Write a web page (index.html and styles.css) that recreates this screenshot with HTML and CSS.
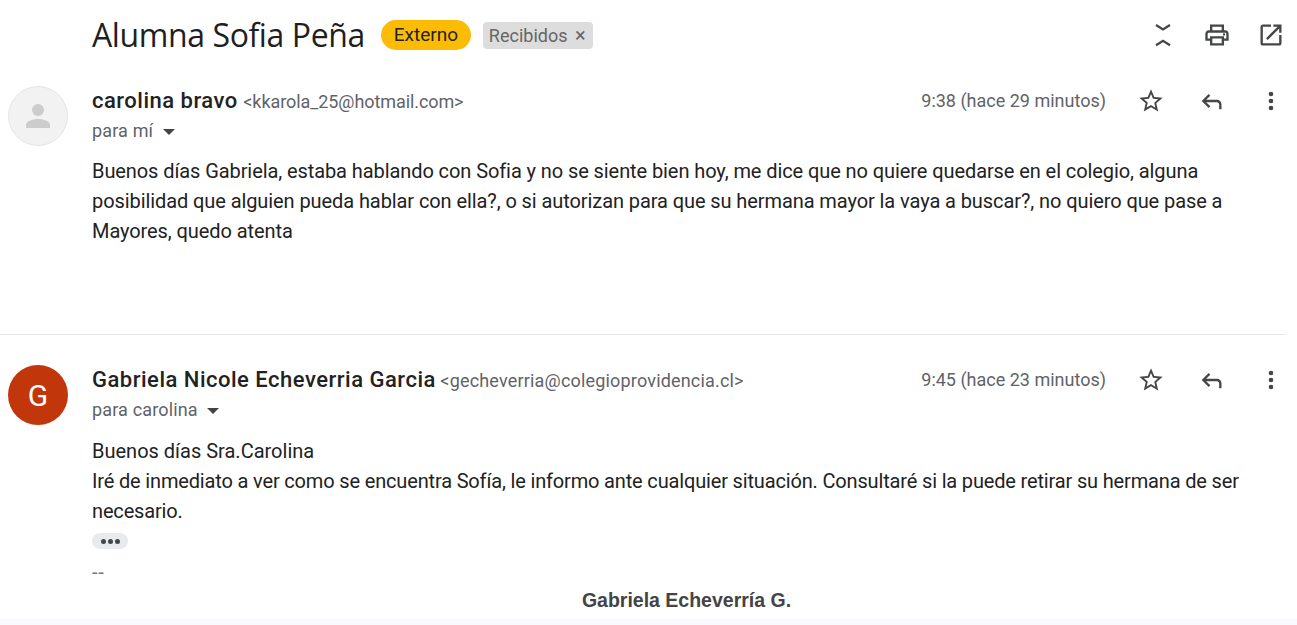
FILE: index.html
```html
<!DOCTYPE html>
<html lang="es">
<head>
<meta charset="utf-8">
<title>Alumna Sofia Peña</title>
<link rel="stylesheet" href="styles.css">
</head>
<body>
<main class="thread">
  <header class="subject">
    <h1 class="title">Alumna Sofia Peña</h1>
    <span class="tag-ext">Externo</span>
    <span class="tag-inbox">Recibidos <span class="tag-x">×</span></span>
    <div class="subject-actions">
      <svg class="icon icon-line" viewBox="0 0 24 24"><path d="M6 3.400L12 7.200L18 3.400M6 20.800L12 17L18 20.800"/></svg>
      <svg class="icon" viewBox="0 0 24 24"><path d="M19 8h-1V3H6v5H5c-1.66 0-3 1.34-3 3v6h4v4h12v-4h4v-6c0-1.66-1.34-3-3-3zM8 5h8v3H8V5zm8 12v2H8v-4h8v2zm2-2v-2H6v2H4v-4c0-.55.45-1 1-1h14c.55 0 1 .45 1 1v4h-2z"/><circle cx="18" cy="11.500" r="1"/></svg>
      <svg class="icon" viewBox="0 0 24 24"><path d="M19 19H5V5h7V3H5c-1.11 0-2 .9-2 2v14c0 1.100.89 2 2 2h14c1.100 0 2-.9 2-2v-7h-2v7zM14 3v2h3.590l-9.830 9.830 1.410 1.410L19 6.410V10h2V3h-7z"/></svg>
    </div>
  </header>

  <article class="msg msg-first">
    <div class="avatar avatar-blank">
      <svg class="avatar-person" viewBox="0 0 24 24"><circle cx="12" cy="8" r="4"/><path d="M12 14c-4 0-8 1.600-8 4v2h16v-2c0-2.400-4-4-8-4z"/></svg>
    </div>
    <div class="msg-main">
      <div class="msg-head">
        <div class="who">
          <div class="from"><b class="name">carolina bravo</b> <span class="addr addr-short">&lt;kkarola_25@hotmail.com&gt;</span></div>
          <div class="to">para mí <span class="caret"></span></div>
        </div>
        <div class="time">9:38 (hace 29 minutos)</div>
        <div class="msg-actions">
          <svg class="icon" viewBox="0 0 24 24"><path d="M22 9.240l-7.190-.62L12 2 9.190 8.630 2 9.240l5.460 4.730L5.820 21 12 17.270 18.180 21l-1.630-7.030L22 9.240zM12 15.400l-3.760 2.270 1-4.280-3.320-2.880 4.380-.38L12 6.100l1.710 4.040 4.380.38-3.320 2.880 1 4.280L12 15.400z"/></svg>
          <svg class="icon" viewBox="0 0 24 24"><path d="M21 19v-4c0-2.200-1.800-4-4-4H7.830l3.580-3.590L10 6l-6 6 6 6 1.410-1.410L7.830 13H17c1.100 0 2 .9 2 2v4h2z"/></svg>
          <svg class="icon" viewBox="0 0 24 24"><circle cx="12" cy="6" r="2"/><circle cx="12" cy="12" r="2"/><circle cx="12" cy="18" r="2"/></svg>
        </div>
      </div>
      <div class="body body-first">
        <p>Buenos días Gabriela, estaba hablando con Sofia y no se siente bien hoy, me dice que no quiere quedarse en el colegio, alguna posibilidad que alguien pueda hablar con ella?, o si autorizan para que su hermana mayor la vaya a buscar?, no quiero que pase a Mayores, quedo atenta</p>
      </div>
    </div>
  </article>

  <article class="msg msg-second">
    <div class="avatar avatar-g">G</div>
    <div class="msg-main">
      <div class="msg-head">
        <div class="who">
          <div class="from"><b class="name">Gabriela Nicole Echeverria Garcia</b> <span class="addr addr-long">&lt;gecheverria@colegioprovidencia.cl&gt;</span></div>
          <div class="to">para carolina <span class="caret"></span></div>
        </div>
        <div class="time">9:45 (hace 23 minutos)</div>
        <div class="msg-actions">
          <svg class="icon" viewBox="0 0 24 24"><path d="M22 9.240l-7.190-.62L12 2 9.190 8.630 2 9.240l5.460 4.730L5.820 21 12 17.270 18.180 21l-1.630-7.030L22 9.240zM12 15.400l-3.760 2.270 1-4.280-3.320-2.880 4.380-.38L12 6.100l1.710 4.040 4.380.38-3.320 2.880 1 4.280L12 15.400z"/></svg>
          <svg class="icon" viewBox="0 0 24 24"><path d="M21 19v-4c0-2.200-1.800-4-4-4H7.830l3.580-3.590L10 6l-6 6 6 6 1.410-1.410L7.830 13H17c1.100 0 2 .9 2 2v4h2z"/></svg>
          <svg class="icon" viewBox="0 0 24 24"><circle cx="12" cy="6" r="2"/><circle cx="12" cy="12" r="2"/><circle cx="12" cy="18" r="2"/></svg>
        </div>
      </div>
      <div class="body body-second">
        <p>Buenos días Sra.Carolina</p>
        <p class="tight">Iré de inmediato a ver como se encuentra Sofía, le informo ante cualquier situación. Consultaré si la puede retirar su hermana de ser necesario.</p>
        <div class="ellipsis"><i></i><i></i><i></i></div>
        <p class="dashes">--</p>
        <p class="sign">Gabriela Echeverría G.</p>
      </div>
    </div>
  </article>
</main>
<div class="bottom-band"></div>
</body>
</html>
```
FILE: styles.css
```css
* { box-sizing: border-box; }
html, body { margin: 0; height: 625px; overflow: hidden; background: #fff; }
body { font-family: Roboto, sans-serif; color: #222; position: relative; }
.thread { display: flex; flex-direction: column; }
.subject { display: flex; align-items: center; height: 70px; padding: 0 12px 0 92px; }
.title { margin: 0; font: 400 32px/40px "Open Sans", Roboto, sans-serif; letter-spacing: -0.4px; color: #1f1f1f; }
.tag-ext { margin-left: 16px; width: 90px; height: 30px; border-radius: 15px; background: #fcbc05; font-size: 19px; line-height: 30px; color: #222; text-align: center; }
.tag-inbox { margin-left: 12px; width: 110px; height: 27px; padding-left: 6px; border-radius: 4px; background: #ddd; font-size: 18px; line-height: 27px; color: #666; }
.tag-x { margin-left: 3px; font-size: 20px; }
.subject-actions { margin-left: auto; display: flex; gap: 26px; }
.icon { width: 28px; height: 28px; fill: #444746; display: block; flex: none; }
.icon-line { fill: none; stroke: #444746; stroke-width: 2; }
.msg { display: flex; padding-left: 8px; padding-right: 12px; }
.msg-first { height: 265px; padding-top: 16px; border-bottom: 1px solid #e8e8e8; margin-right: 11px; padding-right: 1px; }
.msg-second { padding-top: 30px; }
.avatar { width: 60px; height: 60px; border-radius: 50%; flex: none; display: flex; align-items: center; justify-content: center; }
.avatar-blank { background: #f2f2f2; border: 1px solid #e6e6e6; }
.avatar-person { width: 36px; height: 36px; fill: #ccc; }
.avatar-g { background: #c1360a; color: #fff; font-size: 30px; }
.msg-main { flex: 1; margin-left: 24px; min-width: 0; }
.msg-head { display: flex; align-items: flex-start; }
.who { flex: 1; }
.from { line-height: 30px; height: 30px; font-size: 18px; color: #5f6368; }
.name { font-size: 22px; font-weight: 500; letter-spacing: 0.5px; color: #222; }
.addr { font-size: 18px; }
.addr-short { letter-spacing: -0.08px; margin-left: 1px; }
.addr-long { letter-spacing: 0.18px; }
.to { font-size: 18px; line-height: 30px; color: #5f6368; letter-spacing: 0.15px; }
.caret { display: inline-block; margin-left: 5px; vertical-align: middle; border: 6.500px solid transparent; border-top-color: #444; border-bottom: 0; }
.time { font-size: 18px; line-height: 30px; color: #5f6368; margin-right: 31px; }
.msg-actions { display: flex; gap: 32px; padding-top: 1px; }
.body { font-size: 20px; line-height: 30px; color: #222; padding-top: 10px; }
.body-first { letter-spacing: -0.085px; }
.body-second { padding-top: 11px; }
.body p { margin: 0; }
.body .tight { letter-spacing: -0.16px; }
.ellipsis { display: flex; gap: 2px; align-items: center; justify-content: center; width: 36px; height: 16px; margin-top: 7px; border-radius: 8px; background: #e8eaed; }
.ellipsis i { width: 5px; height: 5px; border-radius: 50%; background: #444746; }
.body .dashes { color: #777; margin-top: 8px; letter-spacing: 0.8px; }
.body .sign { text-align: center; font: 700 19.500px/26px "Liberation Sans", sans-serif; color: #444; padding-right: 4px; }
.bottom-band { position: absolute; left: 0; right: 0; bottom: 0; height: 6px; background: #f8fafd; }
```
